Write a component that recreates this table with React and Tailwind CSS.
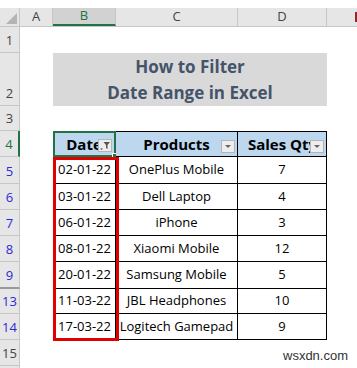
import React from 'react';

const font = { fontFamily: '"Open Sans", "Liberation Sans", sans-serif' };

const rows = [
  ['5', '02-01-22', 'OnePlus Mobile', '7'],
  ['6', '03-01-22', 'Dell Laptop', '4'],
  ['7', '06-01-22', 'iPhone', '3'],
  ['8', '08-01-22', 'Xiaomi Mobile', '12'],
  ['9', '20-01-22', 'Samsung Mobile', '5'],
  ['13', '11-03-22', 'JBL Headphones', '10'],
  ['14', '17-03-22', 'Logitech Gamepad', '9'],
];

function RowHead({ label, className = '' }) {
  return (
    <div className={`flex items-end justify-center pb-[2px] bg-[#e6e6e6] border-b border-r border-[#c6c6c6] text-[13px] ${className}`}>
      {label}
    </div>
  );
}

function DropButton({ filtered }) {
  return (
    <div className="absolute right-[2px] bottom-[3px] w-[14px] h-[13px] bg-[#ededed] border border-[#b5b5b5] flex items-center justify-center">
      {filtered ? (
        <svg width="12" height="10" viewBox="0 0 12 10">
          <path d="M1 7.5 L4 7.5 L2.5 9 Z" fill="#555" />
          <path d="M4.5 1 L11 1 L8.5 4 L8.5 8 L7 7 L7 4 Z" fill="#555" />
        </svg>
      ) : (
        <svg width="8" height="5" viewBox="0 0 8 5">
          <path d="M1 1 L7 1 L4 4 Z" fill="#666" />
        </svg>
      )}
    </div>
  );
}

export default function App() {
  return (
    <div className="relative w-[357px] h-[368px] overflow-hidden bg-white text-[#444]" style={font}>
      <div className="h-[8px] bg-white" />
      {/* column headers */}
      <div className="flex h-[19px] bg-[#e6e6e6] border-b border-[#c6c6c6] text-[13px]">
        <div className="w-[20px] relative border-r border-[#c6c6c6]">
          <svg className="absolute right-[2px] bottom-[2px]" width="11" height="11" viewBox="0 0 11 11">
            <path d="M11 0 L11 11 L0 11 Z" fill="#b4b4b4" />
          </svg>
        </div>
        <div className="w-[33px] flex items-center justify-center border-r border-[#c6c6c6]">A</div>
        <div className="w-[63px] flex items-center justify-center bg-[#d2d2d2] text-[#217346] border-b-2 border-[#217346] border-r border-r-[#c6c6c6]">B</div>
        <div className="w-[122px] flex items-center justify-center border-r border-[#c6c6c6]">C</div>
        <div className="w-[89px] flex items-center justify-center border-r border-[#c6c6c6]">D</div>
        <div className="flex-1 flex items-center justify-end overflow-hidden">
          <div className="w-[2px] h-[10px] bg-[#8b2b2b]" />
        </div>
      </div>

      {/* sheet body */}
      <div className="relative grid grid-cols-[20px_33px_63px_122px_89px_1fr] grid-rows-[26px_53px_25px_26px_27px_26px_26px_26px_27px_25px_26px_26px_26px]">
        <RowHead label="1" />
        <div className="col-span-5" />

        <RowHead label="2" />
        <div />
        <div className="col-span-3 bg-[#d9d9d9] flex flex-col items-center justify-center text-[#44546a] font-bold text-[17px] leading-[26px]">
          <span>How to Filter</span>
          <span>Date Range in Excel</span>
        </div>
        <div />

        <RowHead label="3" />
        <div className="col-span-5" />

        <RowHead label="4" className="bg-[#d2d2d2] text-[#217346] border-r-2 border-r-[#217346]" />
        <div />
        <div className="relative bg-[#bdd7ee] border-2 border-[#217346] flex items-center justify-center font-bold text-[15px] text-black">
          <span className="pr-[1px]">Date</span>
          <DropButton filtered />
          <div className="absolute -right-[3px] -bottom-[3px] w-[5px] h-[5px] bg-[#217346] border border-white" />
        </div>
        <div className="relative bg-[#bdd7ee] border-t border-r border-b border-black flex items-center justify-center font-bold text-[15px] text-black">
          <span>Products</span>
          <DropButton />
        </div>
        <div className="relative bg-[#bdd7ee] border-t border-r border-b border-black flex items-center justify-center font-bold text-[15px] text-black overflow-hidden whitespace-nowrap">
          <span className="pl-[1px]">Sales Qty</span>
          <DropButton />
        </div>
        <div />

        {rows.map(([n, d, p, q]) => (
          <React.Fragment key={n}>
            <RowHead label={n} className={`text-[#2a2ad4] ${n === '9' ? 'border-b-[#9a9a9a] border-b-2' : ''}`} />
            <div />
            <div className="border-l border-r border-b border-black flex items-center justify-center text-[13px] text-black">{d}</div>
            <div className="border-r border-b border-black flex items-center justify-center text-[13px] text-black whitespace-nowrap">{p}</div>
            <div className="border-r border-b border-black flex items-center justify-center text-[13px] text-black">{q}</div>
            <div />
          </React.Fragment>
        ))}

        <RowHead label="15" />
        <div className="col-span-5" />

        <RowHead label="" />
        <div className="col-span-5" />

        {/* red highlight around the date column */}
        <div className="absolute left-[53px] top-[130px] w-[66px] h-[184px] border-[3px] border-[#e00000] pointer-events-none" />
      </div>

      {/* watermark */}
      <div className="absolute left-[283px] top-[348px] text-[13px] leading-[16px] text-[#333]" style={{ fontFamily: '"Liberation Sans", sans-serif' }}>
        wsxdn.com
      </div>
    </div>
  );
}
